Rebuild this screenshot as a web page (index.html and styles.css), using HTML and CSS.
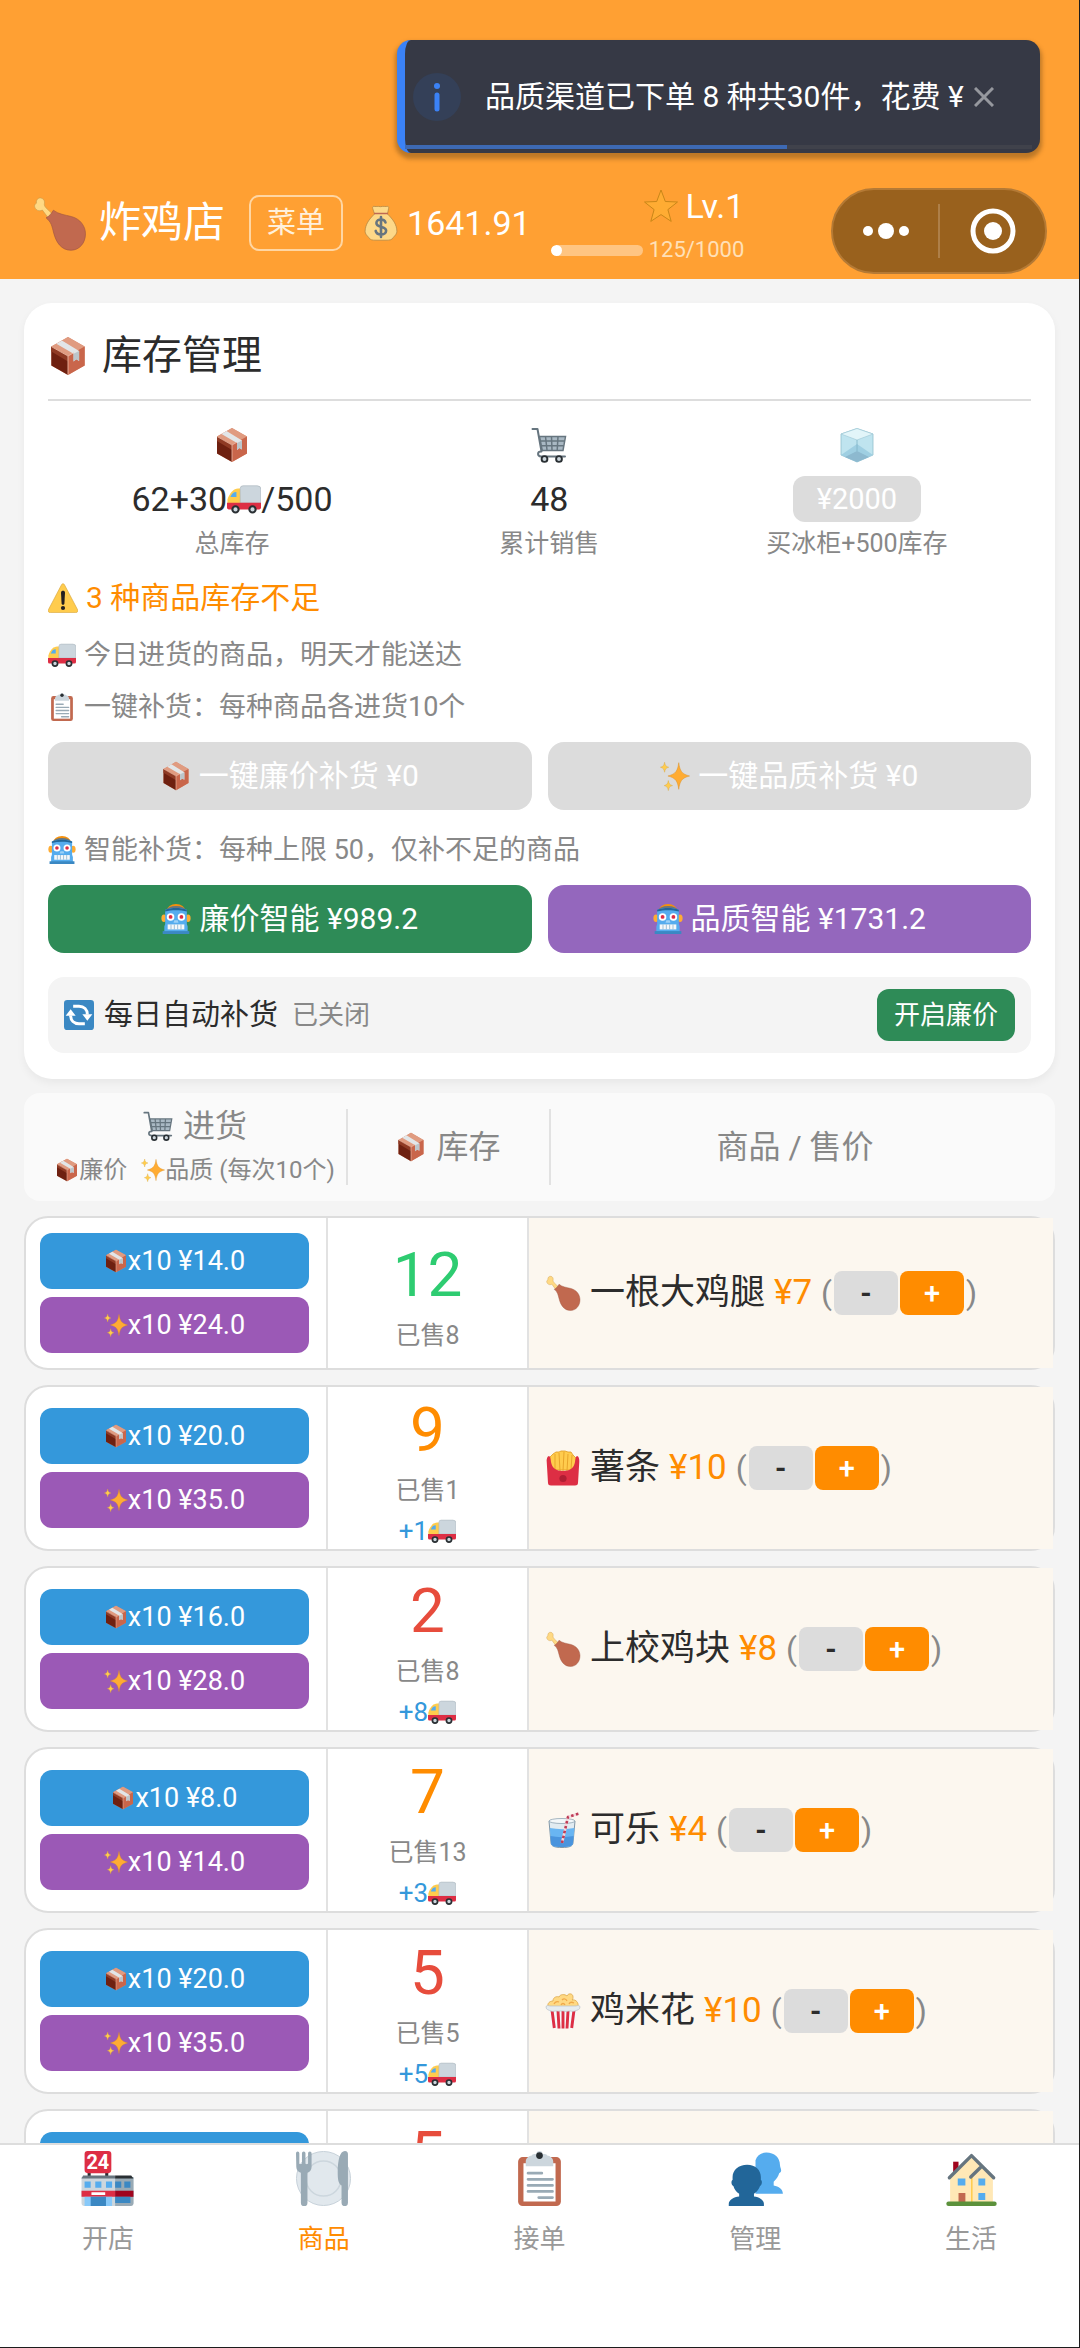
FILE: index.html
```html
<!DOCTYPE html>
<html lang="zh-CN">
<head>
    <meta charset="UTF-8">
    <meta name="viewport" content="width=device-width, initial-scale=1.0">
    <title>炸鸡店</title>
    <link rel="stylesheet" href="styles.css">
</head>
<body>
    <!-- 图标 -->
    <svg class="sprite" aria-hidden="true">
        <symbol id="leg" viewBox="0 0 36 36">
            <path fill="#ffd983" stroke="#c99a4a" stroke-width=".4" d="M11.5 15.5 6.8 9.2C5.6 9.9 3.900 10 2.600 8.600 1.400 7.300 1.300 5.500 2.900 4.700 2.500 2.700 4 .9 5.900 1.300 7.800 1.700 8.500 3.500 8.100 5.100c-.2.900.3 1.800 1 2.600l5.400 5.200z"/>
            <path fill="#c1694f" stroke="#9c5340" stroke-width=".4" d="M14 9.300c3.500 2.700 7.400 3 12 4.200 5.500 1.500 9 6.100 9 11.300 0 6-4 10.700-9.500 10.700-6.300 0-9.700-5.100-11.300-11.300-1.200-4.700-1.500-7-5-9.900 2-1 3.400-2.600 4.800-5z"/>
        </symbol>
        <symbol id="bag" viewBox="0 0 36 36">
            <path fill="#fdd888" stroke="#ad8240" stroke-width=".7" d="M11.500 9 9.700 3.400c-.6-1.900.8-2.400 2.300-1.900 1.300.4 2.300-.4 3.500-.1 1.500.4 2.500.4 4 0 1.300-.4 2.300.5 3.600.1 1.600-.5 3.200 0 2.500 1.900L24.500 9c5.500 5.500 9.200 10.300 9.400 17.300.1 2.300-1.900 4.300-3.400 5.900-1.300 2.700-3.800 3-7.500 3H13c-3.700 0-6.200-.3-7.500-3-1.500-1.600-3.500-3.600-3.400-5.900C2.300 19.300 6 14.500 11.500 9z"/>
            <path fill="none" stroke="#bf6952" stroke-width="1.500" d="M11 8.500h14"/>
            <path fill="none" stroke="#67757f" stroke-width="2.600" stroke-linecap="round" d="M18 12v20M22.500 17.500c-.5-2-2.200-3-4.500-3s-4.600 1.200-4.600 3.600c0 5.300 9.700 2.500 9.700 7.600 0 2.300-2.200 3.800-5.100 3.800s-4.800-1.400-5.300-3.600"/>
        </symbol>
        <symbol id="star" viewBox="0 0 36 36">
            <path fill="#ffac33" stroke="#c98618" stroke-width="1" stroke-linejoin="round" d="m18 2 4.300 11.500 12.200.500-9.600 7.600 3.300 11.800L18 26.600 7.800 33.400l3.300-11.800L1.500 14l12.200-.500z"/>
        </symbol>
        <symbol id="box" viewBox="0 0 36 36">
            <path fill="#d98b70" d="M18 1 33 9.500v17L18 35 3 26.500v-17z"/>
            <path fill="#e09b80" d="M18 1 33 9.500 18 18 3 9.500z"/>
            <path fill="#6e2010" d="M3 9.500 18 18v17L3 26.500z"/>
            <path fill="#8f3a24" d="M3 9.500 18 18v5L3 14z"/>
            <path fill="#c9664b" d="M33 9.500 18 18v17l15-8.500z"/>
            <path fill="#e2e6e8" d="m7.500 7 5-3L28 13.500v9l-2.500-1.500-2.500 2v-7z"/>
            <path fill="#bcc6cb" d="m23 16 5-2.500v9l-2.500-1.500-2.500 2z"/>
            <path fill="none" stroke="#eeb9a4" stroke-width=".8" d="M18 18v17M3 9.500 18 18l5-2.800"/>
        </symbol>
        <symbol id="cart" viewBox="0 0 36 36">
            <path fill="#a9b8c3" d="M9 9.500h25L31.800 23H11z"/>
            <path fill="none" stroke="#66757f" stroke-width="1.500" d="M8.500 9.500h26L32 23.500H11.200zM9.500 14h24M10.500 18.700h22M14.500 9.500 16 23M20.500 9.500l.5 14M27 9.500l-.8 14"/>
            <path fill="none" stroke="#66757f" stroke-width="2" stroke-linecap="round" stroke-linejoin="round" d="M1.500 2h5l4 22.500c-4.500-.2-4.500 4.500-.5 5h24"/>
            <circle cx="13.500" cy="32" r="2.900" fill="#ccd6dd" stroke="#292f33" stroke-width="1.900"/>
            <circle cx="28" cy="32" r="2.900" fill="#ccd6dd" stroke="#292f33" stroke-width="1.900"/>
        </symbol>
        <symbol id="ice" viewBox="0 0 36 36">
            <path fill="#bfe4ef" stroke="#93bfcd" stroke-width=".8" stroke-linejoin="round" d="M18 1.500 34 7v21L18 35 2 28V7z"/>
            <path fill="#e2f5f9" stroke="#a3ccd8" stroke-width=".7" d="M18 1.500 34 7l-16 6L2 7z"/>
            <path fill="#9fcfe2" d="m2 28 16-11v18zM34 28 18 17v18z"/>
            <path fill="#8db9cf" d="m18 24 12 6-12 5-12-5z"/>
            <path fill="none" stroke="#7fb3c7" stroke-width=".8" d="M18 13v11"/>
        </symbol>
        <symbol id="truck" viewBox="0 0 36 36">
            <path fill="#ffcc4d" d="M14 7c-1-.2-5 0-7 1.500C4 10.800 1 16 .5 18.500V25H15z"/>
            <path fill="#ccd6dd" stroke="#aab5bc" stroke-width=".7" d="M17 4h15a4 4 0 0 1 4 4v14H14V7a3 3 0 0 1 3-3z"/>
            <path fill="#55acee" d="M3.500 16c1.500-3.500 3-5.500 6.500-5.500V16z"/>
            <path fill="#dd2e44" d="M0 22h36v5a2 2 0 0 1-2 2H2a2 2 0 0 1-2-2z"/>
            <circle cx="9" cy="29" r="3.300" fill="#ccd6dd" stroke="#292f33" stroke-width="2.200"/>
            <circle cx="27" cy="29" r="3.300" fill="#ccd6dd" stroke="#292f33" stroke-width="2.200"/>
        </symbol>
        <symbol id="warn" viewBox="0 0 36 36">
            <path fill="#ffcc4d" stroke="#d9a63a" stroke-width=".8" d="M2.700 35.500c-2.200 0-3-1.800-2.200-3.400L16.300 2c.9-1.600 2.500-1.600 3.400 0l15.800 30.100c.8 1.600 0 3.400-2.200 3.400z"/>
            <path fill="#231f20" d="M15.600 11.500c0-3 4.800-3 4.800 0l-.7 13c-.2 2-3.200 2-3.400 0z"/>
            <circle cx="18" cy="30" r="2.500" fill="#231f20"/>
        </symbol>
        <symbol id="clip" viewBox="0 0 36 36">
            <path fill="#c1694f" d="M7 4h22a3 3 0 0 1 3 3v26a3 3 0 0 1-3 3H7a3 3 0 0 1-3-3V7a3 3 0 0 1 3-3z"/>
            <path fill="#fff" d="M7.500 8h21v25h-21z"/>
            <path fill="#ccd6dd" d="M13 3c0-1 2-1 3-1a2 2 0 0 1 4 0c1 0 3 0 3 1 2 0 4 2 4 4v3H9V7c0-2 2-4 4-4z"/>
            <circle cx="18" cy="3" r="2.200" fill="#292f33"/>
            <path stroke="#99aab5" stroke-width="1.800" stroke-linecap="round" d="M10.500 14.500h9M10.500 18.500h16M10.500 22.500h16M10.500 26.500h16M17.500 30.500h9"/>
        </symbol>
        <symbol id="spark" viewBox="0 0 36 36">
            <path fill="#ffac33" stroke="#d98b1c" stroke-width=".5" d="M22.500 2c1.500 10 3.500 13.500 13 16-9.500 2.500-11.500 6-13 16-1.500-10-3.500-13.500-13-16 9.500-2.500 11.500-6 13-16z"/>
            <path fill="#ffcc4d" stroke="#d9a63a" stroke-width=".5" d="M5.500 1.500c.8 4 1.500 5 5 6-3.500 1-4.200 2-5 6-.8-4-1.500-5-5-6 3.500-1 4.200-2 5-6zM10 23.500c.8 4 1.500 5 5 6-3.500 1-4.200 2-5 6-.8-4-1.500-5-5-6 3.500-1 4.200-2 5-6z"/>
        </symbol>
        <symbol id="robot" viewBox="0 0 36 36">
            <path fill="#f4900c" d="M7 8a11 8 0 0 1 22 0z"/>
            <path fill="#67757f" d="M6 8.500a12 6 0 0 1 24 0z"/>
            <ellipse cx="3.500" cy="17" rx="3" ry="4.500" fill="#ffac33"/>
            <ellipse cx="32.500" cy="17" rx="3" ry="4.500" fill="#ffac33"/>
            <path fill="#55acee" d="M5 7c8-3 18-3 26 0v17l1 3v7H4v-7l1-3z"/>
            <path fill="#226699" d="M5 7c8-3 18-3 26 0v2c-8-2-18-2-26 0z"/>
            <path fill="#3b88c3" d="M2 32.500h32V36H2z"/>
            <circle cx="11.500" cy="15.500" r="4.500" fill="#fff"/>
            <circle cx="24.500" cy="15.500" r="4.500" fill="#fff"/>
            <circle cx="11.500" cy="15.500" r="2.300" fill="#dd2e44"/>
            <circle cx="24.500" cy="15.500" r="2.300" fill="#dd2e44"/>
            <path fill="#9ad0f7" d="M16 19.500h4l1 3h-6z"/>
            <path fill="#f5f8fa" d="M8 24.500h20v6H8z"/>
            <path stroke="#8cb4cf" stroke-width="1" d="M12 24.500v6M16 24.500v6M20 24.500v6M24 24.500v6"/>
        </symbol>
        <symbol id="cycle" viewBox="0 0 36 36">
            <rect width="36" height="36" rx="4" fill="#3b88c3"/>
            <path fill="none" stroke="#fff" stroke-width="3.600" d="M11 7.500h7c6 0 10 4 10 10M25 28.500h-7c-6 0-10-4-10-10"/>
            <path fill="#fff" d="M22 17h12l-6 8zM2 19h12l-6-8z"/>
        </symbol>
        <symbol id="fries" viewBox="0 0 36 36">
            <path fill="#ffcc4d" stroke="#e09a20" stroke-width=".8" d="M6 20 5 7l3-3 3-2 3 0 2-1h4l3 1 3 0 2 3 3 3-1 12z"/>
            <path fill="none" stroke="#e8a52b" stroke-width="1" d="M10 4v16M14 3l1 18M19 2l-1 19M23 4l-1 17M27 5l-1 15"/>
            <path fill="#dd2e44" d="M4 6c1 0 1.500 2 2 6 1 6 5 9 12 9s11-3 12-9c.5-4 1-6 2-6 1.500 0 2.500 3 2.300 5.500L33 33c-.2 1.800-1.200 2.500-3 2.500H6c-1.800 0-2.800-.7-3-2.500L1.700 11.500C1.500 9 2.500 6 4 6z"/>
            <circle cx="18" cy="28.500" r="3.600" fill="#b01e33"/>
        </symbol>
        <symbol id="cola" viewBox="0 0 36 36">
            <path fill="#e1ebf1" stroke="#7f97a8" stroke-width="1" d="M4 9h26l-2 22c-.3 3-3 4.500-11 4.500S6.300 34 6 31z"/>
            <path fill="#69b5f2" d="M4.800 16c8 1.500 17 1.500 24.600 0l-1.400 15c-.3 3-3 4-11 4s-10.700-1-11-4z"/>
            <path fill="#4a94dd" d="M5.500 24c7 1.500 15 1.500 23 0l-.6 7c-.3 3-3 4-11 4s-10.500-1-10.800-4z"/>
            <ellipse cx="17" cy="9" rx="13" ry="2.500" fill="#f3f7f9" stroke="#8fa4b2" stroke-width=".8"/>
            <path fill="none" stroke="#f4d7dc" stroke-width="2.600" stroke-linejoin="round" d="m17 31 6-26 11-3.500"/>
            <path fill="none" stroke="#be3b55" stroke-width="2.600" stroke-dasharray="2.500 2.500" stroke-linejoin="round" d="m17 31 6-26 11-3.500"/>
        </symbol>
        <symbol id="popcorn" viewBox="0 0 36 36">
            <path fill="#ffd983" stroke="#dca84d" stroke-width=".8" d="M3 14C2 10 5 8 8 8c0-4 4-5 6-4 1-3 6-3 8-1 1-3 6-3 6 1 0 1 0 2-1 3 4-1 7 3 6 7z"/>
            <path fill="none" stroke="#f0a94a" stroke-width="1.300" d="M9 11c1-2 3-3 5-2M17 7c2-2 4-1 5 1M24 11c1-2 3-2 5-1M16 12c1-2 3-2 4 0"/>
            <path fill="#f5f8fa" d="M3.500 15h29L29 34c-.2 1-1 1.500-2 1.500H9c-1 0-1.800-.5-2-1.500z"/>
            <path stroke="#dd2e44" stroke-width="2.900" d="m7 17 2.300 18M13 18l1 17.500M18 18v17.500M23 18l-1 17.500M29 17l-2.300 18"/>
            <path fill="#e6ecef" stroke="#b9c2c9" stroke-width=".7" d="M1 14c0-2 3-1.500 4-1h26c1-.5 4-1 4 1 0 3-3 3-5 4-3 1-4-.5-6 0s-4 .5-6 0-4 .5-6 0-4 1-6 0-5-1-5-4z"/>
        </symbol>
        <symbol id="shop" viewBox="0 0 36 36">
            <path stroke="#292f33" stroke-width="2" d="M6 13v5M17.500 13v5"/>
            <rect x="3" width="17.500" height="14.500" rx="2" fill="#dd2e44"/>
            <text x="11.700" y="12" text-anchor="middle" font-family="Roboto, sans-serif" font-size="13" font-weight="700" fill="#fff">24</text>
            <path fill="#ccd6dd" d="M1 17h34v17a2 2 0 0 1-2 2H3a2 2 0 0 1-2-2z"/>
            <path fill="#99aab5" d="M23 17h12v17a2 2 0 0 1-2 2H23z"/>
            <path fill="#67757f" d="M2 16h21v2H1z"/>
            <path fill="#292f33" d="M23 16h10.500l1.500 2H23z"/>
            <path fill="#55acee" d="M3 20h4v4H3zM10 20h4v4h-4zM17 20h4v4h-4z"/>
            <path fill="#3b88c3" d="M23 20h4v4h-4zM29 20h4v4h-4z"/>
            <path fill="#dd2e44" d="M1 26h22v4H1z"/>
            <path fill="#a0041e" d="M23 26h12v4H23z"/>
            <path fill="#fff" d="M7.500 27h9v1.800h-9z"/>
            <path fill="#88c9f9" d="M3 30h18v6H3z"/>
            <path fill="#3b88c3" d="M7 30h10v6H7zM23 30h10v4H23z"/>
        </symbol>
        <symbol id="plate" viewBox="0 0 36 36">
            <circle cx="18" cy="18" r="17.700" fill="#e1e8ed" stroke="#c3ced6" stroke-width=".6"/>
            <circle cx="18" cy="18" r="11.500" fill="#e1e8ed" stroke="#ccd6dd" stroke-width="1"/>
            <path fill="#99aab5" d="M0 1.500a1 1 0 0 1 2.200 0V8c0 .8 1.700.8 1.700 0V1.500a1 1 0 0 1 2.300 0V8c0 .8 1.700.8 1.700 0V1.500a1 1 0 0 1 2.300 0v9c0 2-1.200 3.200-2.700 3.800V34a2 2 0 0 1-4.300 0V14.300C1.500 13.700.2 12.500.2 10.500z"/>
            <path fill="#99aab5" d="M34 2v32a2 2 0 0 1-4.200 0V22.500c-2-1.200-2.500-3.500-2.500-8.500 0-8 1.500-14 4.700-14 1.500 0 2 1 2 2z"/>
        </symbol>
        <symbol id="people" viewBox="0 0 36 36">
            <path fill="#55acee" d="M25 1c5.500 0 9 3.500 9 8 0 1.500.8 2.500.8 3.700 0 1-.8 1.500-1.300 1.800-.5 2-1.900 4-3.600 5.600v2.400c3.300.6 6 2.500 6 5.200V28H18V6c1-3 3.500-5 7-5z"/>
            <path fill="#226699" d="M12.500 9c5.500 0 9 3.500 9 8v2c1 .3 1 3.300-.6 4-.5 1.700-2 3.700-3.900 5v1.700c3.500.3 6.500 2.300 6.500 4.800v1.500h-23v-1.500c0-2.500 3.200-4.500 6.800-4.800V28c-2-1.300-3.300-3.300-3.700-5-1.700-.7-1.600-3.700-.6-4v-2c0-4.500 4-8 9.500-8z"/>
        </symbol>
        <symbol id="home" viewBox="0 0 36 36">
            <path fill="#a0041e" d="M6 7h3.500v9H6z"/>
            <path fill="#ffe8b6" d="M4 17 17.500 3 32 17v17H4z"/>
            <path fill="#ffcc4d" d="M17.700 16h1v18h-1z"/>
            <path fill="none" stroke="#66757f" stroke-width="2.200" stroke-linecap="round" stroke-linejoin="round" d="M3.500 17.500 18 3l14.500 14.500M17.500 17l6.700-6.500"/>
            <path fill="#55acee" d="M9 18h5v4.500H9zM22.500 18h4.500v4.500h-4.500zM22.500 27.500h4.500V32h-4.500z"/>
            <path fill="#c1694f" d="M9.500 27.500H14V34H9.500z"/>
            <rect x="1.500" y="33" width="33" height="3" rx="1.500" fill="#5c913b"/>
        </symbol>
    </svg>

    <div class="app">
        <header class="topbar">
            <h1 class="shop-name"><svg class="icon-xl"><use href="#leg"/></svg>炸鸡店</h1>
            <button class="menu-btn" type="button">菜单</button>
            <div class="money"><svg class="icon-lg"><use href="#bag"/></svg>1641.91</div>
            <div class="level">
                <div class="level-name"><svg class="icon-lg"><use href="#star"/></svg>Lv.1</div>
                <div class="exp">
                    <div class="exp-bar"><div class="exp-fill" style="width: 12.5%"></div></div>
                    <span>125/1000</span>
                </div>
            </div>
            <div class="capsule">
                <button type="button" aria-label="更多">
                    <svg width="46" height="44" viewBox="0 0 46 44"><circle cx="5" cy="22" r="5" fill="#fff"/><circle cx="23" cy="22" r="8" fill="#fff"/><circle cx="41" cy="22" r="5" fill="#fff"/></svg>
                </button>
                <button type="button" aria-label="关闭">
                    <svg width="46" height="46" viewBox="0 0 46 46"><circle cx="23" cy="23" r="20" fill="none" stroke="#fff" stroke-width="5"/><circle cx="23" cy="23" r="9" fill="#fff"/></svg>
                </button>
            </div>
        </header>

        <div class="toast" role="status">
            <svg class="toast-icon" viewBox="0 0 48 48"><circle cx="24" cy="24" r="24" fill="#344058"/><circle cx="24" cy="13" r="3" fill="#3b82f6"/><path stroke="#3b82f6" stroke-width="5" stroke-linecap="round" d="M24 22v14"/></svg>
            <span class="toast-text">品质渠道已下单 8 种共30件，花费 ¥</span>
            <button class="toast-close" type="button" aria-label="关闭提示">
                <svg width="20" height="20" viewBox="0 0 20 20"><path stroke="#96989e" stroke-width="3" d="m1 1 18 18M19 1 1 19"/></svg>
            </button>
            <div class="toast-progress"><div class="toast-bar" style="width: 61%"></div></div>
        </div>

        <main class="content">
            <section class="card">
                <h2 class="card-title"><svg class="icon-lg"><use href="#box"/></svg>库存管理</h2>

                <div class="stats">
                    <div class="stat">
                        <svg class="icon-lg"><use href="#box"/></svg>
                        <div class="stat-value">62+30<svg class="icon-md"><use href="#truck"/></svg>/500</div>
                        <div class="stat-label">总库存</div>
                    </div>
                    <div class="stat">
                        <svg class="icon-lg"><use href="#cart"/></svg>
                        <div class="stat-value">48</div>
                        <div class="stat-label">累计销售</div>
                    </div>
                    <div class="stat">
                        <svg class="icon-lg"><use href="#ice"/></svg>
                        <button class="fridge-btn" type="button" disabled>¥2000</button>
                        <div class="stat-label">买冰柜+500库存</div>
                    </div>
                </div>

                <p class="low-stock"><svg class="icon-sm"><use href="#warn"/></svg>3 种商品库存不足</p>
                <p class="tip"><svg class="icon-sm"><use href="#truck"/></svg>今日进货的商品，明天才能送达</p>
                <p class="tip"><svg class="icon-sm"><use href="#clip"/></svg>一键补货：每种商品各进货10个</p>
                <div class="actions">
                    <button type="button" disabled><svg class="icon-sm"><use href="#box"/></svg>一键廉价补货 ¥0</button>
                    <button type="button" disabled><svg class="icon-sm"><use href="#spark"/></svg>一键品质补货 ¥0</button>
                </div>
                <p class="tip"><svg class="icon-sm"><use href="#robot"/></svg>智能补货：每种上限 50，仅补不足的商品</p>
                <div class="actions">
                    <button class="cheap" type="button"><svg class="icon-sm"><use href="#robot"/></svg>廉价智能 ¥989.2</button>
                    <button class="quality" type="button"><svg class="icon-sm"><use href="#robot"/></svg>品质智能 ¥1731.2</button>
                </div>

                <div class="auto">
                    <svg class="icon-sm"><use href="#cycle"/></svg>
                    <span class="auto-name">每日自动补货</span>
                    <span class="auto-state">已关闭</span>
                    <button class="auto-btn" type="button">开启廉价</button>
                </div>
            </section>

            <table class="goods">
                <thead>
                    <tr>
                        <th class="col-buy">
                            <div class="th-line"><svg class="icon-sm"><use href="#cart"/></svg>进货</div>
                            <div class="th-sub"><span><svg class="icon-xs"><use href="#box"/></svg>廉价</span><span><svg class="icon-xs"><use href="#spark"/></svg>品质 (每次10个)</span></div>
                        </th>
                        <th class="col-stock"><div class="th-line"><svg class="icon-sm"><use href="#box"/></svg>库存</div></th>
                        <th class="col-item">商品 / 售价</th>
                    </tr>
                </thead>
                <tbody>
                    <tr>
                        <td class="col-buy">
                            <button class="buy-cheap" type="button"><svg class="icon-xs"><use href="#box"/></svg>x10 ¥14.0</button>
                            <button class="buy-quality" type="button"><svg class="icon-xs"><use href="#spark"/></svg>x10 ¥24.0</button>
                        </td>
                        <td class="col-stock">
                            <div class="num good">12</div>
                            <div class="sold">已售8</div>
                        </td>
                        <td class="col-item">
                            <svg class="icon-lg"><use href="#leg"/></svg><span class="name">一根大鸡腿</span><span class="price">¥7</span>
                            <span class="adjust">(<button class="minus" type="button">-</button><button class="plus" type="button">+</button>)</span>
                        </td>
                    </tr>
                    <tr>
                        <td class="col-buy">
                            <button class="buy-cheap" type="button"><svg class="icon-xs"><use href="#box"/></svg>x10 ¥20.0</button>
                            <button class="buy-quality" type="button"><svg class="icon-xs"><use href="#spark"/></svg>x10 ¥35.0</button>
                        </td>
                        <td class="col-stock">
                            <div class="num low">9</div>
                            <div class="sold">已售1</div>
                            <div class="coming">+1<svg class="icon-truck"><use href="#truck"/></svg></div>
                        </td>
                        <td class="col-item">
                            <svg class="icon-lg"><use href="#fries"/></svg><span class="name">薯条</span><span class="price">¥10</span>
                            <span class="adjust">(<button class="minus" type="button">-</button><button class="plus" type="button">+</button>)</span>
                        </td>
                    </tr>
                    <tr>
                        <td class="col-buy">
                            <button class="buy-cheap" type="button"><svg class="icon-xs"><use href="#box"/></svg>x10 ¥16.0</button>
                            <button class="buy-quality" type="button"><svg class="icon-xs"><use href="#spark"/></svg>x10 ¥28.0</button>
                        </td>
                        <td class="col-stock">
                            <div class="num bad">2</div>
                            <div class="sold">已售8</div>
                            <div class="coming">+8<svg class="icon-truck"><use href="#truck"/></svg></div>
                        </td>
                        <td class="col-item">
                            <svg class="icon-lg"><use href="#leg"/></svg><span class="name">上校鸡块</span><span class="price">¥8</span>
                            <span class="adjust">(<button class="minus" type="button">-</button><button class="plus" type="button">+</button>)</span>
                        </td>
                    </tr>
                    <tr>
                        <td class="col-buy">
                            <button class="buy-cheap" type="button"><svg class="icon-xs"><use href="#box"/></svg>x10 ¥8.0</button>
                            <button class="buy-quality" type="button"><svg class="icon-xs"><use href="#spark"/></svg>x10 ¥14.0</button>
                        </td>
                        <td class="col-stock">
                            <div class="num low">7</div>
                            <div class="sold">已售13</div>
                            <div class="coming">+3<svg class="icon-truck"><use href="#truck"/></svg></div>
                        </td>
                        <td class="col-item">
                            <svg class="icon-lg"><use href="#cola"/></svg><span class="name">可乐</span><span class="price">¥4</span>
                            <span class="adjust">(<button class="minus" type="button">-</button><button class="plus" type="button">+</button>)</span>
                        </td>
                    </tr>
                    <tr>
                        <td class="col-buy">
                            <button class="buy-cheap" type="button"><svg class="icon-xs"><use href="#box"/></svg>x10 ¥20.0</button>
                            <button class="buy-quality" type="button"><svg class="icon-xs"><use href="#spark"/></svg>x10 ¥35.0</button>
                        </td>
                        <td class="col-stock">
                            <div class="num bad">5</div>
                            <div class="sold">已售5</div>
                            <div class="coming">+5<svg class="icon-truck"><use href="#truck"/></svg></div>
                        </td>
                        <td class="col-item">
                            <svg class="icon-lg"><use href="#popcorn"/></svg><span class="name">鸡米花</span><span class="price">¥10</span>
                            <span class="adjust">(<button class="minus" type="button">-</button><button class="plus" type="button">+</button>)</span>
                        </td>
                    </tr>
                    <tr class="next-row">
                        <td class="col-buy">
                            <button class="buy-cheap" type="button" aria-label="廉价进货"></button>
                            <button class="buy-quality" type="button" aria-label="品质进货"></button>
                        </td>
                        <td class="col-stock">
                            <div class="num bad">5</div>
                        </td>
                        <td class="col-item"></td>
                    </tr>
                </tbody>
            </table>
        </main>

        <nav class="tabbar">
            <a href="#"><svg class="icon-xl"><use href="#shop"/></svg>开店</a>
            <a href="#" class="active"><svg class="icon-xl"><use href="#plate"/></svg>商品</a>
            <a href="#"><svg class="icon-xl"><use href="#clip"/></svg>接单</a>
            <a href="#"><svg class="icon-xl"><use href="#people"/></svg>管理</a>
            <a href="#"><svg class="icon-xl"><use href="#home"/></svg>生活</a>
        </nav>
    </div>
</body>
</html>
```
FILE: styles.css
```css
* {
    box-sizing: border-box;
}

body {
    margin: 0;
    font-family: Roboto, "Noto Sans CJK SC", sans-serif;
    color: #2c2c2c;
    background-color: #f4f4f4;
}

button {
    font: inherit;
    border: none;
    padding: 0;
    margin: 0;
    color: #fff;
    background: none;
}

h1, h2, p {
    margin: 0;
    font-weight: 400;
}

svg {
    flex-shrink: 0;
}

.sprite {
    display: none;
}

.icon-xs { width: 24px; height: 24px; }
.icon-truck { width: 28px; height: 28px; }
.icon-sm { width: 30px; height: 30px; }
.icon-md { width: 34px; height: 34px; }
.icon-lg { width: 36px; height: 36px; }
.icon-xl { width: 55px; height: 55px; }

.app {
    display: flex;
    flex-direction: column;
    height: 100vh;
    border-right: 1px solid #1c1c1c;
    border-bottom: 1px solid #1c1c1c;
}

/* 顶部 */
.topbar {
    position: relative;
    display: flex;
    align-items: center;
    gap: 20px;
    padding: 186px 32px 19px;
    background-color: #ffa033;
    color: #fff;
}

.shop-name {
    display: flex;
    align-items: center;
    gap: 12px;
    font-size: 42px;
    line-height: 56px;
}

.menu-btn {
    height: 56px;
    margin-left: 4px;
    padding: 0 16px;
    border: 2px solid #ffd6a3;
    border-radius: 10px;
    font-size: 29px;
    line-height: 40px;
    color: #fff0dc;
}

.money {
    display: flex;
    align-items: center;
    gap: 8px;
    font-size: 34px;
    line-height: 40px;
}

.level-name {
    display: flex;
    align-items: center;
    justify-content: flex-end;
    gap: 6px;
    font-size: 34px;
    line-height: 40px;
}

.exp {
    display: flex;
    align-items: center;
    gap: 6px;
    margin-top: 14px;
    font-size: 22px;
    line-height: 20px;
    color: #ffe0b8;
}

.exp-bar {
    width: 92px;
    height: 11px;
    border-radius: 6px;
    background-color: #ffc582;
    overflow: hidden;
}

.exp-fill {
    height: 100%;
    border-radius: 6px;
    background-color: #fff;
}

.capsule {
    position: absolute;
    top: 188px;
    right: 32px;
    display: flex;
    align-items: center;
    width: 216px;
    height: 86px;
    border: 2px solid #b57a35;
    border-radius: 43px;
    background-color: #99611d;
}

.capsule button {
    flex: 1;
    display: flex;
    align-items: center;
    justify-content: center;
    height: 54px;
}

.capsule button + button {
    border-left: 2px solid #ae7f48;
}

.toast {
    position: absolute;
    top: 40px;
    right: 40px;
    display: flex;
    align-items: center;
    width: 643px;
    height: 113px;
    padding: 0 46px 0 8px;
    border-left: 8px solid #3b82f6;
    border-radius: 14px;
    background-color: #363945;
    box-shadow: 0 4px 4px 2px rgba(90, 60, 20, 0.4);
    color: #fff;
}

.toast-icon {
    width: 48px;
    height: 48px;
}

.toast-text {
    flex: 1;
    margin-left: 24px;
    font-size: 30px;
    line-height: 40px;
    white-space: nowrap;
}

.toast-close {
    display: flex;
}

.toast-progress {
    position: absolute;
    left: 0;
    right: 8px;
    bottom: 4px;
    height: 4px;
    background-color: #40424b;
}

.toast-bar {
    height: 100%;
    background-color: #3d69b3;
}

/* 库存管理 */
.content {
    flex: 1;
    min-height: 0;
    padding: 24px 24px 0;
    overflow-y: auto;
    scrollbar-width: none;
}

.card {
    padding: 24px 24px 26px;
    border-radius: 28px;
    background-color: #fff;
    box-shadow: 0 4px 8px rgba(0, 0, 0, 0.05);
}

.card-title {
    display: flex;
    align-items: center;
    gap: 14px;
    padding-bottom: 14px;
    border-bottom: 2px solid #ddd;
    font-size: 40px;
    line-height: 58px;
}

.card-title svg {
    width: 40px;
    height: 40px;
}

.stats {
    display: flex;
    justify-content: space-around;
    padding-top: 26px;
}

.stat {
    display: flex;
    flex-direction: column;
    align-items: center;
}

.stat-value {
    display: flex;
    align-items: center;
    margin: 12px 0 5px;
    font-size: 34px;
    line-height: 48px;
}

.stat-label {
    font-size: 25px;
    line-height: 32px;
    color: #888;
}

.fridge-btn {
    height: 46px;
    margin: 13px 0 6px;
    padding: 0 24px;
    border-radius: 12px;
    background-color: #dcdcdc;
    font-size: 29px;
    line-height: 44px;
}

.low-stock, .tip {
    display: flex;
    align-items: center;
    gap: 8px;
}

.low-stock {
    margin-top: 18px;
    font-size: 30px;
    line-height: 40px;
    color: #ff8c00;
}

.tip {
    margin-top: 16px;
    font-size: 27px;
    line-height: 36px;
    color: #888;
}

.tip svg {
    width: 28px;
    height: 28px;
}

.low-stock + .tip {
    margin-top: 19px;
}

.actions {
    display: flex;
    gap: 16px;
    margin-top: 17px;
}

.actions + .tip {
    margin-top: 22px;
}

.actions button {
    flex: 1;
    display: flex;
    align-items: center;
    justify-content: center;
    gap: 8px;
    height: 68px;
    border-radius: 16px;
    font-size: 30px;
    line-height: 40px;
}

.actions button:disabled {
    background-color: #dcdcdc;
}

.actions .cheap, .auto .auto-btn {
    background-color: #2e8b57;
}

.actions .quality {
    background-color: #9467bd;
}

.auto {
    display: flex;
    align-items: center;
    margin-top: 24px;
    padding: 12px 16px;
    border-radius: 16px;
    background-color: #f4f4f4;
}

.auto-name {
    margin-left: 10px;
    font-size: 29px;
    line-height: 40px;
}

.auto-state {
    margin-left: 14px;
    font-size: 26px;
    line-height: 40px;
    color: #888;
}

.auto-btn {
    margin-left: auto;
    height: 52px;
    padding: 0 17px;
    border-radius: 12px;
    font-size: 26px;
    line-height: 40px;
}

/* 商品列表 */
.goods, .goods thead {
    display: block;
}

.goods tbody {
    display: flex;
    flex-direction: column;
    gap: 15px;
    padding: 15px 0;
}

.goods tr {
    display: flex;
}

.goods th, .goods td {
    padding: 0;
    font-weight: 400;
}

.goods thead tr {
    margin-top: 14px;
    padding: 16px;
    border-radius: 16px;
    background-color: #fafafa;
    font-size: 32px;
    line-height: 40px;
    color: #888;
}

.goods th {
    display: flex;
    flex-direction: column;
    align-items: center;
    justify-content: center;
    height: 76px;
}

.goods th + th {
    border-left: 2px solid #e2e2e2;
}

.goods th.col-buy {
    width: 306px;
    padding-left: 4px;
}

.col-stock {
    width: 203px;
}

.col-item {
    flex: 1;
}

.th-line {
    display: flex;
    align-items: center;
    gap: 10px;
}

.th-sub {
    display: flex;
    gap: 14px;
    margin-top: 6px;
    font-size: 24px;
    line-height: 36px;
    white-space: nowrap;
}

.th-sub span {
    display: flex;
    align-items: center;
}

.goods tbody tr {
    border: 2px solid #ddd;
    border-radius: 24px;
    background-color: #fff;
}

td.col-buy {
    width: 300px;
    display: flex;
    flex-direction: column;
    justify-content: center;
    gap: 8px;
}

.goods td.col-buy {
    padding: 15px 17px 15px 14px;
}

.goods td.col-buy button {
    display: flex;
    align-items: center;
    justify-content: center;
    height: 56px;
    border-radius: 12px;
    font-size: 27px;
    line-height: 36px;
}

.goods .buy-cheap {
    background-color: #3498db;
}

.goods .buy-quality {
    background-color: #9b59b6;
}

td.col-stock {
    display: flex;
    flex-direction: column;
    align-items: center;
    justify-content: center;
    border-left: 2px solid #e2e2e2;
    border-right: 2px solid #e2e2e2;
}

.num {
    padding-top: 4px;
    font-size: 62px;
    line-height: 78px;
}

.good { color: #2ecc71; }
.low { color: #ff8c00; }
.bad { color: #e74c3c; }

.sold {
    margin-top: 4px;
    font-size: 25px;
    line-height: 36px;
    color: #888;
}

.coming {
    display: flex;
    align-items: center;
    margin-top: 4px;
    font-size: 26px;
    line-height: 36px;
    color: #3498db;
}

.next-row .num {
    margin-bottom: 80px;
}

td.col-item {
    display: flex;
    align-items: center;
    background-color: #fcf7ef;
    font-size: 35px;
    line-height: 48px;
}

.goods td.col-item {
    padding-left: 16px;
}

.name {
    margin-left: 9px;
}

.price {
    margin-left: 9px;
    color: #ff8c00;
}

.adjust {
    display: flex;
    align-items: center;
    gap: 2px;
    margin-left: 9px;
    font-size: 32px;
    color: #888;
}

.minus, .plus {
    width: 64px;
    height: 44px;
    border-radius: 8px;
    font-size: 29px;
    font-weight: 500;
    line-height: 40px;
}

.minus {
    background-color: #dcdcdc;
    font-weight: 700;
    color: #2c2c2c;
}

.plus {
    background-color: #ff8c00;
}

/* 底部导航 */
.tabbar {
    display: flex;
    height: 204px;
    padding-top: 6px;
    border-top: 2px solid #ddd;
    background-color: #fff;
}

.tabbar a {
    flex: 1;
    display: flex;
    flex-direction: column;
    align-items: center;
    gap: 15px;
    font-size: 26px;
    line-height: 36px;
    color: #999;
    text-decoration: none;
}

.tabbar .active {
    color: #ff8c00;
}
```
